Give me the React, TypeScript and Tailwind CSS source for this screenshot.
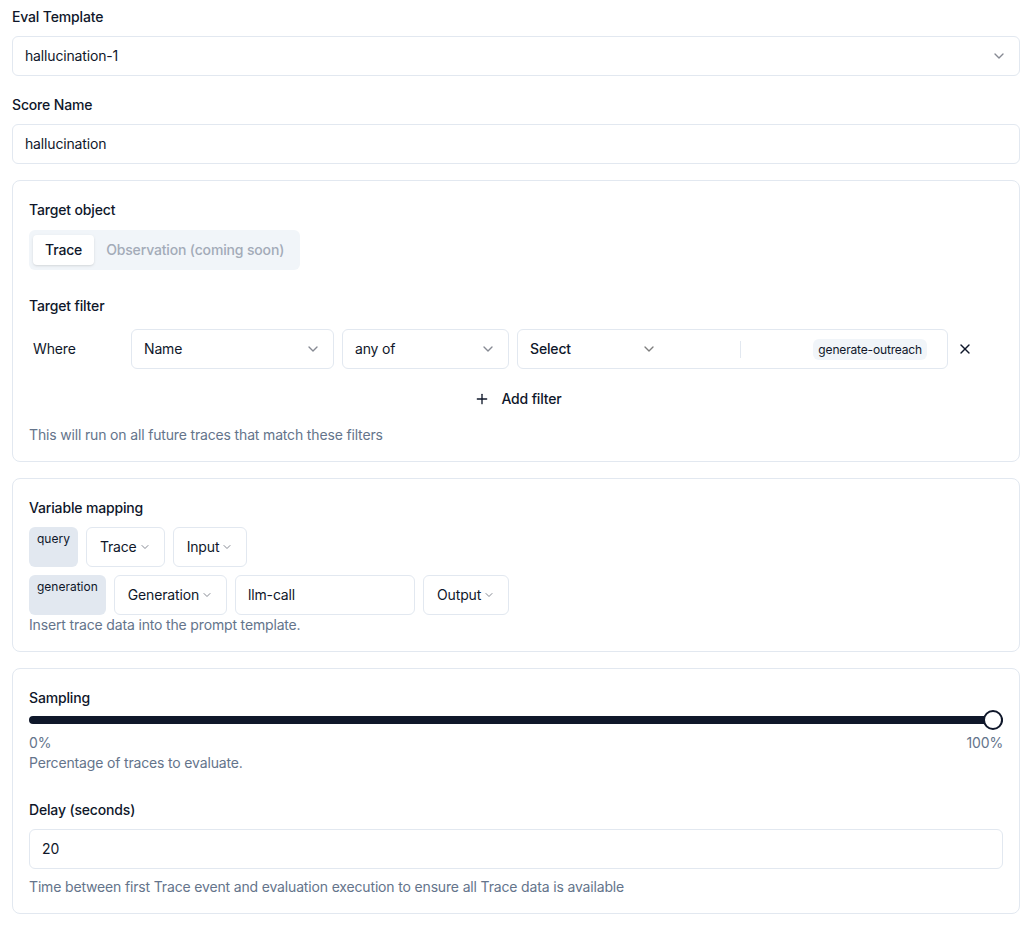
import { ChevronDown, Plus, X } from 'lucide-react';

function Label({ children, className = '' }: { children: React.ReactNode; className?: string }) {
  return <div className={`text-sm leading-5 font-medium text-[#0f172a] ${className}`}>{children}</div>;
}

function Help({ children, className = '' }: { children: React.ReactNode; className?: string }) {
  return <div className={`text-sm leading-5 text-[#64748b] ${className}`}>{children}</div>;
}

function SelectBox({ value, className = '' }: { value: string; className?: string }) {
  return (
    <div className={`h-10 flex items-center justify-between rounded-md border border-[#e2e8f0] bg-white px-3 text-sm text-[#0f172a] ${className}`}>
      <span>{value}</span>
      <ChevronDown className="h-4 w-4 opacity-50" />
    </div>
  );
}

function TextBox({ value, className = '' }: { value: string; className?: string }) {
  return (
    <div className={`h-10 flex items-center rounded-md border border-[#e2e8f0] bg-white px-3 text-sm text-[#0f172a] ${className}`}>
      {value}
    </div>
  );
}

function MiniSelect({ value }: { value: string }) {
  return (
    <div className="h-10 flex items-center rounded-md border border-[#e2e8f0] bg-white px-[13px] text-sm text-[#0f172a]">
      <span>{value}</span>
      <ChevronDown className="ml-0.5 h-3 w-3 opacity-50" />
    </div>
  );
}

function VarBadge({ name }: { name: string }) {
  return (
    <div className="h-10 rounded-md bg-[#e2e8f0] px-2 pt-[4px] text-xs tracking-normal text-[#0f172a]">{name}</div>
  );
}

export default function App() {
  return (
    <div className="min-h-screen bg-white px-3 pt-[7px] font-['Inter',sans-serif] tracking-[-0.01em]">
      <Label>Eval Template</Label>
      <SelectBox value="hallucination-1" className="mt-[9px]" />

      <Label className="mt-[19px]">Score Name</Label>
      <TextBox value="hallucination" className="mt-[9px]" />

      {/* Target */}
      <div className="mt-4 rounded-lg border border-[#e2e8f0] px-4 pt-[19px] pb-4">
        <Label>Target object</Label>
        <div className="mt-[10px] inline-flex h-10 items-center rounded-md bg-[#f1f5f9] p-1 text-sm font-medium">
          <div className="flex h-[30px] items-center rounded-sm bg-white px-3 text-[#0f172a] shadow-sm">Trace</div>
          <div className="flex h-[30px] items-center px-3 text-[#a3abb8]">Observation (coming soon)</div>
        </div>

        <Label className="mt-[26px]">Target filter</Label>
        <div className="mt-[13px] flex items-center gap-2">
          <div className="w-[94px] pl-1 text-sm text-[#0f172a]">Where</div>
          <SelectBox value="Name" className="w-[203px]" />
          <SelectBox value="any of" className="w-[167px]" />
          <div className="flex h-10 w-[431px] items-center rounded-md border border-[#e2e8f0] bg-white pl-3 pr-[20px] text-sm">
            <span className="font-medium text-[#0f172a]">Select</span>
            <ChevronDown className="ml-[70px] h-4 w-4 opacity-50" />
            <div className="ml-[83px] h-[17px] w-px bg-[#e2e8f0]" />
            <div className="ml-auto rounded-md bg-[#f1f5f9] px-[5px] py-[2px] text-xs leading-[17px] text-[#0f172a]">
              generate-outreach
            </div>
          </div>
          <X className="ml-[1px] h-4 w-4 text-[#0f172a]" />
        </div>
        <div className="mt-[10px] flex justify-center">
          <div className="flex h-[40px] items-center gap-[11px] pl-1 text-sm font-medium text-[#0f172a]">
            <Plus className="h-4 w-4" />
            <span>Add filter</span>
          </div>
        </div>
        <Help className="mt-[6px]">This will run on all future traces that match these filters</Help>
      </div>

      {/* Variable mapping */}
      <div className="mt-4 rounded-lg border border-[#e2e8f0] px-4 pt-[19px] pb-4">
        <Label>Variable mapping</Label>
        <div className="mt-[9px] flex gap-2">
          <VarBadge name="query" />
          <MiniSelect value="Trace" />
          <MiniSelect value="Input" />
        </div>
        <div className="mt-2 flex gap-2">
          <VarBadge name="generation" />
          <MiniSelect value="Generation" />
          <TextBox value="llm-call" className="w-[180px]" />
          <MiniSelect value="Output" />
        </div>
        <Help>Insert trace data into the prompt template.</Help>
      </div>

      {/* Sampling */}
      <div className="mt-4 rounded-lg border border-[#e2e8f0] px-4 pt-[19px] pb-4">
        <Label>Sampling</Label>
        <div className="relative mt-[2px] flex h-5 items-center">
          <div className="h-2 w-full rounded-full bg-[#0f172a]" />
          <div className="absolute right-0 top-0 h-5 w-5 rounded-full border-2 border-[#0f172a] bg-white" />
        </div>
        <div className="mt-[3px] flex justify-between text-sm leading-5 text-[#64748b]">
          <span>0%</span>
          <span>100%</span>
        </div>
        <Help>Percentage of traces to evaluate.</Help>

        <Label className="mt-[27px]">Delay (seconds)</Label>
        <TextBox value="20" className="mt-[9px]" />
        <Help className="mt-2">Time between first Trace event and evaluation execution to ensure all Trace data is available</Help>
      </div>
    </div>
  );
}
